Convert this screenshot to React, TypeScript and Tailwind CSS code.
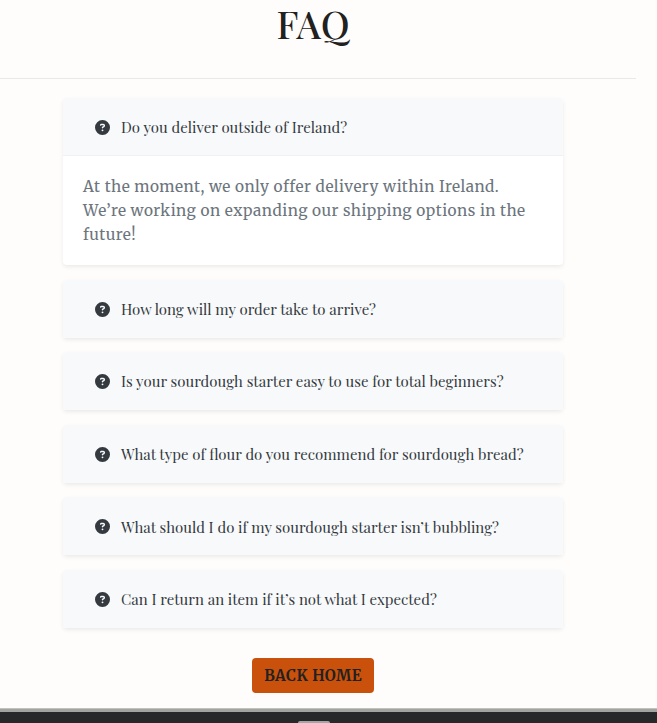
import { FaCircleQuestion } from "react-icons/fa6";

const heading = "font-['Playfair_Display','Liberation_Serif',serif]";
const copy = "font-['Merriweather','DejaVu_Serif_Condensed','DejaVu_Serif',serif]";

const items = [
  {
    question: "Do you deliver outside of Ireland?",
    answer: [
      "At the moment, we only offer delivery within Ireland.",
      "We’re working on expanding our shipping options in the",
      "future!",
    ],
  },
  { question: "How long will my order take to arrive?" },
  { question: "Is your sourdough starter easy to use for total beginners?" },
  { question: "What type of flour do you recommend for sourdough bread?" },
  { question: "What should I do if my sourdough starter isn’t bubbling?" },
  { question: "Can I return an item if it’s not what I expected?" },
];

export default function App() {
  return (
    <div className={`flex h-[723px] w-full flex-col bg-[#fffdfc] ${copy}`}>
      <h1 className={`flex h-[78px] w-[626px] shrink-0 justify-center text-[38px] leading-[48px] font-medium text-[#212121] ${heading}`}>
        FAQ
      </h1>
      <hr className="w-[636px] shrink-0 border-t border-[#e9e9e9]" />
      <main className="flex w-[626px] flex-col items-center pt-[19px]">
        <div className="flex w-[500px] flex-col gap-[14.6px]">
          {items.map((item) => (
            <section key={item.question} className="rounded-[4px] bg-white shadow-[0_2px_4px_rgba(0,0,0,0.075)]">
              <h2 className={`flex items-center rounded-t-[4px] bg-[#f8f9fb] pl-8 text-[15px] whitespace-nowrap text-[#343a40] ${item.answer ? "h-[57px] pt-[2px]" : "h-[58px] pt-px"} ${heading}`}>
                <FaCircleQuestion className="mr-[11px] size-[15px] shrink-0" />
                <span>{item.question}</span>
              </h2>
              {item.answer && (
                <div className="h-[110px] border-t border-[#f0f1f2] px-5 pt-[18px] text-[16px] leading-6 tracking-[0.5px] text-[#6c757d]">
                  {item.answer.map((line) => (
                    <p key={line} className="origin-left scale-x-[0.96] whitespace-nowrap">{line}</p>
                  ))}
                </div>
              )}
            </section>
          ))}
        </div>
        <button className="mt-[30px] flex h-[35px] w-[122px] items-center justify-center rounded-[4px] bg-[#c9510c] text-[16px] font-bold tracking-[0.5px] whitespace-nowrap text-[#212121]">
          <span className="scale-x-[0.94]">BACK HOME</span>
        </button>
      </main>
      <footer className="mt-auto flex h-[15px] shrink-0 flex-col border-t border-[#bfc2bf] bg-[#272829]">
        <div className="h-[3px] bg-[#a1a4a1]" />
        <div className="mt-auto ml-[298px] h-[2px] w-8 rounded-t-[2px] bg-[#a5a5a5]" />
      </footer>
    </div>
  );
}
